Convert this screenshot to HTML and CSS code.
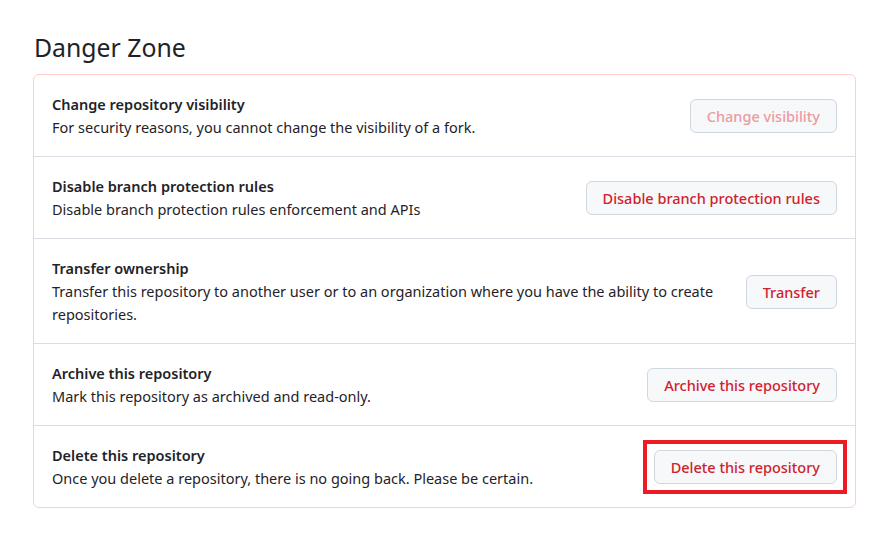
FILE: index.html
```html
<!DOCTYPE html>
<html lang="en">
<head>
    <meta charset="UTF-8">
    <meta name="viewport" content="width=device-width, initial-scale=1.0">
    <title>Danger Zone</title>
    <link rel="stylesheet" href="styles.css">
</head>
<body>
    <div class="settings">
        <h2 class="zone-title">Danger Zone</h2>
        <div class="danger-box">
            <div class="danger-row">
                <div class="row-text">
                    <strong>Change repository visibility</strong>
                    <p>For security reasons, you cannot change the visibility of a fork.</p>
                </div>
                <button class="btn-danger" disabled>Change visibility</button>
            </div>
            <div class="danger-row">
                <div class="row-text">
                    <strong>Disable branch protection rules</strong>
                    <p>Disable branch protection rules enforcement and APIs</p>
                </div>
                <button class="btn-danger">Disable branch protection rules</button>
            </div>
            <div class="danger-row">
                <div class="row-text">
                    <strong>Transfer ownership</strong>
                    <p>Transfer this repository to another user or to an organization where you have the ability to create repositories.</p>
                </div>
                <button class="btn-danger">Transfer</button>
            </div>
            <div class="danger-row">
                <div class="row-text">
                    <strong>Archive this repository</strong>
                    <p>Mark this repository as archived and read-only.</p>
                </div>
                <button class="btn-danger">Archive this repository</button>
            </div>
            <div class="danger-row">
                <div class="row-text">
                    <strong>Delete this repository</strong>
                    <p>Once you delete a repository, there is no going back. Please be certain.</p>
                </div>
                <span class="marked">
                    <button class="btn-danger">Delete this repository</button>
                </span>
            </div>
        </div>
    </div>
</body>
</html>
```

FILE: styles.css
```css
*{
    box-sizing: border-box;
}
body{
    margin: 0;
    background: #fff;
    color: #1f2328;
    font-family: "Noto Sans", "Open Sans", sans-serif;
    font-size: 14.5px;
}
.settings{
    padding: 30px 20px 0 33px;
}
.zone-title{
    margin: 0 0 10px 1px;
    font-size: 24.8px;
    font-weight: 400;
    line-height: 34px;
}
.danger-box{
    border: 1px solid #ffcecb;
    border-radius: 6px;
}
.danger-row{
    display: flex;
    align-items: center;
    justify-content: space-between;
    gap: 16px;
    padding: 18px 18px 17px 18px;
    border-top: 1px solid #d8dee4;
}
.danger-row:first-child{
    border-top: none;
}
.row-text{
    flex: 1;
    line-height: 23px;
}
.row-text strong{
    font-weight: 600;
}
.row-text p{
    margin: 0;
}
.btn-danger{
    display: block;
    height: 34px;
    padding: 0 16px;
    font-family: inherit;
    font-size: 14.5px;
    font-weight: 500;
    color: #cf222e;
    background-color: #f6f8fa;
    border: 1px solid #d0d7de;
    border-radius: 6px;
    white-space: nowrap;
    cursor: pointer;
}
.btn-danger:disabled{
    color: #ec9aa0;
    cursor: default;
}
/* red annotation frame drawn over the delete button */
.marked{
    position: relative;
}
.marked::after{
    content: "";
    position: absolute;
    top: -10px;
    bottom: -10px;
    left: -11px;
    right: -10px;
    border: 4px solid #ed1c24;
    pointer-events: none;
}
```
